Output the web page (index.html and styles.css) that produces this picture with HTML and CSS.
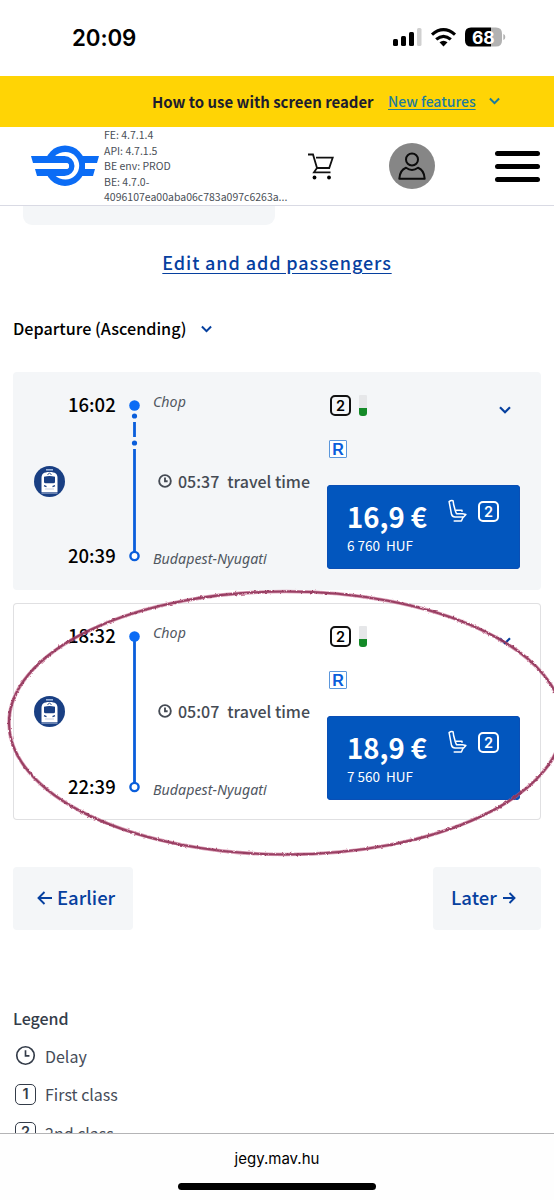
FILE: index.html
```
<!DOCTYPE html>
<html lang="en">
<head>
<meta charset="utf-8">
<title>MÁV</title>
<link rel="stylesheet" href="styles.css">
</head>
<body>
<svg class="defs" width="0" height="0">
  <symbol id="train" viewBox="0 0 31 31">
    <circle cx="15.5" cy="15.5" r="15.5" fill="#193f83"/>
    <path d="M12 3.800h7" stroke="#9db5dc" stroke-width="1.600"/>
    <path d="M7.500 26V12c0-4 2-6 8-6s8 2 8 6v14z" fill="#fff"/>
    <path d="M13.500 9l2-2.200 2 2.200" stroke="#193f83" stroke-width=".9" fill="none"/>
    <path d="M10 10.700q5.500-1.600 11 0v5q0 1.600-1.600 1.600h-7.800q-1.600 0-1.600-1.600z" fill="#193f83"/>
    <path d="M10 19.700l2.500.9M21 19.700l-2.500.9" stroke="#193f83" stroke-width="1.300"/>
    <path d="M11 23h9" stroke="#b9c5da" stroke-width=".8"/>
    <path d="M7.500 27h16" stroke="#9fb0cf" stroke-width="1.200"/>
  </symbol>
  <symbol id="clock" viewBox="0 0 24 24">
    <circle cx="12" cy="12" r="10" fill="none" stroke="currentColor" stroke-width="var(--sw)"/>
    <path d="M12 6v6.500h4.500" fill="none" stroke="currentColor" stroke-width="var(--sw)"/>
  </symbol>
  <symbol id="seat" viewBox="0 0 19 24">
    <g fill="none" stroke="#fff" stroke-width="1.500" stroke-linejoin="round" stroke-linecap="round">
      <path d="M5.500 4.300 5 1.600Q3 .9 1.100 2.600L3.500 15.300Q4.200 18 7 18h8.600l2.300-2.400-3.400-.9H8.500L7.300 11.800 5.500 5"/>
      <path d="M8 11.300h6v1"/>
      <path d="M15 18.200l-1.600 3.800H6.200"/>
    </g>
  </symbol>
  <symbol id="chevron" viewBox="0 0 12 8"><path d="M1 1.300l5 5 5-5" fill="none" stroke="currentColor" stroke-width="2.200"/></symbol>
</svg>

<header class="status">
  <span class="status-time">20:09</span>
  <svg class="status-icons" width="114" height="22" viewBox="0 0 114 22">
    <rect x="0" y="12" width="5" height="7" rx="1.500"/>
    <rect x="8" y="9" width="5" height="10" rx="1.500"/>
    <rect x="16" y="5" width="5" height="14" rx="1.500"/>
    <rect x="24" y="1" width="4.500" height="18" rx="1.500" fill="#d0d0d0"/>
    <g fill="none" stroke="#000" stroke-width="3.200">
      <path d="M39 7.600q11.500-9.800 23 0"/>
      <path d="M43.200 12.400q7.300-6.200 14.600 0"/>
    </g>
    <path d="M46.500 15.200q4-3 8 0l-4 4.200z"/>
    <path d="M78 .5h20v19H78q-6 0-6-6v-7q0-6 6-6z"/>
    <path d="M98 .5h5q6 0 6 6v7q0 6-6 6h-5z" fill="#b2b2b2"/>
    <path d="M110.300 7q2 .7 2 3t-2 3z" fill="#b2b2b2"/>
    <text x="79" y="16.500" class="battery">68</text>
  </svg>
</header>

<div class="banner">
  <span class="banner-text">How to use with screen reader</span>
  <a class="banner-link">New features</a>
  <svg class="chev banner-chev"><use href="#chevron"/></svg>
</div>

<nav class="nav">
  <svg class="logo" width="68" height="42" viewBox="0 0 68 42">
    <circle cx="34" cy="20.700" r="20.200" fill="#0b6cf5"/>
    <path d="M48 11h20l-2 7H54v6h10l-2 7H48z" fill="#0b6cf5"/>
    <path d="M54 18h14v6H54z" fill="#fff"/>
    <path d="M24 11q4.500-4 10.500-4a13.700 13.700 0 0 1 0 27.400q-6 0-10.500-4z" fill="#fff"/>
    <path d="M0 11h33.500a10 10 0 0 1 0 20H6l-2-7h31a3 3 0 0 0 0-6H2z" fill="#0b6cf5"/>
    <path d="M2 18h33a3 3 0 0 1 0 6H2z" fill="#fff"/>
  </svg>
  <div class="versions">
    <div>FE: 4.7.1.4</div><div>API: 4.7.1.5</div><div>BE env: PROD</div><div>BE: 4.7.0-</div><div class="hash">4096107ea00aba06c783a097c6263a...</div>
  </div>
  <svg class="cart" width="26" height="28" viewBox="0 0 26 28">
    <path d="M0 2.500h5l4 13.500M8 5.700h16.700l-3.500 10.300H9M9 16l-3 4.300H22.500" fill="none" stroke="#111" stroke-width="1.800"/>
    <circle cx="6.500" cy="25.500" r="1.900"/><circle cx="21" cy="25.500" r="1.900"/>
  </svg>
  <svg class="user" width="46" height="46" viewBox="0 0 46 46">
    <circle cx="23" cy="23" r="23" fill="#868686"/>
    <g fill="none" stroke="#0c0c0c" stroke-width="2" stroke-linejoin="round">
      <circle cx="23" cy="16.500" r="6"/>
      <path d="M17 24.800q6 4.400 12 0 6.300 2.500 6.700 11H10.300q.4-8.500 6.700-11z"/>
    </g>
  </svg>
  <div class="menu"><i></i><i></i><i></i></div>
</nav>

<main class="page">
  <div class="stub"></div>
  <a class="edit">Edit and add passengers</a>
  <div class="sort"><span class="sort-text">Departure (Ascending)</span><svg class="chev sort-chev"><use href="#chevron"/></svg></div>

  <section class="card card-grey">
    <svg class="train"><use href="#train"/></svg>
    <div class="times"><span>16:02</span><span>20:39</span></div>
    <svg class="rail" width="18" height="181" viewBox="0 0 18 181">
      <path d="M8.500 32v15M8.500 59v107" stroke="#0a5edb" stroke-width="2.800"/>
      <circle cx="8.500" cy="15.500" r="5.300" fill="#0b6cf5"/>
      <circle cx="8.500" cy="26" r="2.600" fill="#0a5edb"/><circle cx="8.500" cy="53" r="2.600" fill="#0a5edb"/>
      <circle cx="8.500" cy="166" r="4.100" fill="#fff" stroke="#0a5edb" stroke-width="2.400"/>
    </svg>
    <div class="stations">
      <em class="chop">Chop</em>
      <div class="travel"><svg class="clock-s"><use href="#clock"/></svg><span class="dur">05:37</span><span>travel time</span></div>
      <em class="buda">Budapest-Nyugati</em>
    </div>
    <div class="offer">
      <div class="row"><b class="cls">2</b><i class="level"></i><svg class="chev card-chev"><use href="#chevron"/></svg></div>
      <b class="res">R</b>
      <div class="price">
        <div><div class="eur">16,9 €</div><div class="huf">6 760&nbsp; HUF</div></div>
        <svg class="seat"><use href="#seat"/></svg><b class="cls cls-w">2</b>
      </div>
    </div>
  </section>

  <section class="card card-line">
    <svg class="train"><use href="#train"/></svg>
    <div class="times"><span>18:32</span><span>22:39</span></div>
    <svg class="rail" width="18" height="181" viewBox="0 0 18 181">
      <path d="M8.500 15v151" stroke="#0a5edb" stroke-width="2.800"/>
      <circle cx="8.500" cy="15.500" r="5.300" fill="#0b6cf5"/>
      <circle cx="8.500" cy="166" r="4.100" fill="#fff" stroke="#0a5edb" stroke-width="2.400"/>
    </svg>
    <div class="stations">
      <em class="chop">Chop</em>
      <div class="travel"><svg class="clock-s"><use href="#clock"/></svg><span class="dur">05:07</span><span>travel time</span></div>
      <em class="buda">Budapest-Nyugati</em>
    </div>
    <div class="offer">
      <div class="row"><b class="cls">2</b><i class="level"></i><svg class="chev card-chev"><use href="#chevron"/></svg></div>
      <b class="res">R</b>
      <div class="price">
        <div><div class="eur">18,9 €</div><div class="huf">7 560&nbsp; HUF</div></div>
        <svg class="seat"><use href="#seat"/></svg><b class="cls cls-w">2</b>
      </div>
    </div>
  </section>

  <div class="pager">
    <a class="btn earlier"><svg width="15" height="14" viewBox="0 0 15 14"><path d="M15 7H1.500M7.500 1l-6 6 6 6"/></svg><span>Earlier</span></a>
    <a class="btn later"><span>Later</span><svg width="13" height="12" viewBox="0 0 13 12"><path d="M0 6h11.500M6.500 1l5 5-5 5"/></svg></a>
  </div>

  <h2 class="legend-title">Legend</h2>
  <ul class="legend">
    <li><svg class="clock-l"><use href="#clock"/></svg><span>Delay</span></li>
    <li><b class="cls cls-g">1</b><span>First class</span></li>
    <li><b class="cls cls-g">2</b><span>2nd class</span></li>
  </ul>
</main>

<footer class="browser"><span class="url">jegy.mav.hu</span><i class="home"></i></footer>

<svg class="mark" width="554" height="300" viewBox="0 0 554 300">
  <filter id="rough" x="-5%" y="-5%" width="110%" height="110%">
    <feTurbulence type="fractalNoise" baseFrequency=".4" numOctaves="2" seed="4"/>
    <feDisplacementMap in="SourceGraphic" scale="2.500" xChannelSelector="R" yChannelSelector="G"/>
  </filter>
  <g fill="none" filter="url(#rough)">
    <ellipse cx="286" cy="148" rx="277" ry="131.500" stroke="#c25f85" stroke-opacity=".6" stroke-width="3.600"/>
    <ellipse cx="286" cy="148" rx="277" ry="131.500" stroke="#8e2f55" stroke-opacity=".85" stroke-width="2.200"/>
  </g>
</svg>
</body>
</html>
```
FILE: styles.css
```
* { box-sizing: border-box; }
body {
  margin: 0; width: 554px; height: 1200px; overflow: hidden; position: relative;
  display: flex; flex-direction: column; background: #fff; color: #000;
  font-family: "Noto Sans CJK SC", "Noto Sans", sans-serif;
}
.defs { position: absolute; }
i, em, b { display: block; }
a, span { white-space: nowrap; }
.chev { display: block; flex: none; }

.status { height: 76px; flex: none; display: flex; justify-content: space-between; padding: 24px 47px 0 72px; }
.status-time { font: 600 22.3px/28px Inter, sans-serif; letter-spacing: -.1px; }
.status-icons { margin-top: 3px; }
.battery { font: 700 17.500px Inter, sans-serif; fill: #fff; }

.banner { height: 51px; flex: none; background: #ffd405; display: flex; align-items: center; padding: 0 0 0 152px; line-height: 20px; font-size: 14.950px; }
.banner-text { font-weight: 700; color: #1c1c2e; width: 222px; }
.banner-link { margin: -1px 0 0 14px; width: 88px; font-size: 14px; font-weight: 500; color: #1c7c9c; text-decoration: underline; text-underline-offset: 2px; }
.banner-chev { width: 11px; height: 8px; margin: 0 0 1px 13px; color: #1c7c9c; }

.nav { height: 79px; flex: none; border-bottom: 1px solid #d9dae4; display: flex; align-items: center; padding-left: 31px; }
.logo { flex: none; }
.versions { margin-left: 5px; width: 204px; font-size: 10.500px; line-height: 15.400px; color: #4a4f57; }
.versions div { white-space: nowrap; }
.cart { flex: none; }
.user { margin-left: 55px; flex: none; }
.menu { margin-left: 60px; width: 45px; display: flex; flex-direction: column; gap: 8px; }
.menu i { height: 5px; border-radius: 3px; background: #000; }

.page { flex: 1; min-height: 0; overflow: hidden; padding: 0 13px; display: flex; flex-direction: column; }
.stub { flex: none; width: 252px; height: 19px; margin-left: 10px; background: #f4f6f8; border-radius: 0 0 9px 9px; }
.edit { align-self: center; margin-top: 21px; line-height: 32px; font-size: 18px; font-weight: 500; color: #06409f; letter-spacing: .9px; text-decoration: underline; text-underline-offset: 3px; }
.sort { flex: none; display: flex; align-items: center; height: 30px; margin-top: 35px; font-size: 16.200px; font-weight: 500; }
.sort-text { width: 173px; }
.sort-chev { width: 11px; height: 8px; margin: 1px 0 0 15px; color: #06409f; }

.card {
  flex: none; height: 217.500px; margin-bottom: 13px; border-radius: 4px; padding: 18px 21px 18.500px;
  display: grid; grid-template-columns: 31px 48px 18px 174px 193px; column-gap: 0;
}
.card-grey { background: #f4f6f8; margin-top: 29px; }
.card-line { box-shadow: inset 0 0 0 1px #e0e0e2; }
.train { width: 31px; height: 31px; align-self: center; margin-top: 1px; }
.times { margin-left: 3px; display: flex; flex-direction: column; justify-content: space-between; padding: 2px 0 4px; font-size: 18.500px; line-height: 24px; font-weight: 500; }
.rail { margin-left: 13px; overflow: visible; }
.stations { margin: 0 0 0 22px; display: flex; flex-direction: column; justify-content: space-between; color: #454b54; }
.stations em { font: italic 400 14.200px/24px "Noto Sans", sans-serif; letter-spacing: .04px; color: #50565f; }
.travel { display: flex; align-items: center; font-size: 16px; line-height: 24px; font-weight: 500; padding-left: 5px; white-space: nowrap; }
.clock-s { --sw: 3.200; width: 14px; height: 14px; margin-right: 6px; flex: none; }
.dur { margin-right: 8px; }
.offer { margin-left: 22px; width: 193px; }
.row { display: flex; padding: 5px 0 0 3px; height: 26px; }
.cls { width: 21px; height: 21px; border: 2px solid #111; border-radius: 5px; font: 600 14.500px/17px Inter, sans-serif; text-align: center; flex: none; }
.level { width: 8px; height: 21px; margin-left: 8px; border-radius: 1px 1px 3px 3px; background: linear-gradient(#e6e7e9 60%, #148a28 60%); }
.card-chev { width: 12px; height: 8px; margin: 11px 0 0 132px; color: #06409f; }
.res { margin: 24px 0 0 2px; width: 18px; height: 18px; border: 1px solid #5b97dc; border-radius: 1px; background: #fff; color: #0a5edb; font: 700 16px/17px "Liberation Sans", sans-serif; text-align: center; }
.price { margin-top: 27px; height: 84px; background: #0256be; border-radius: 4px; color: #fff; display: flex; padding: 13px 0 0 20px; box-shadow: inset 0 0 0 1px #0a4fb5; }
.price > div { width: 101px; white-space: nowrap; }
.eur { font-size: 27.500px; line-height: 36px; font-weight: 700; }
.huf { font-size: 13.500px; line-height: 20px; margin-top: 1px; }
.seat { width: 19px; height: 24px; flex: none; margin-top: 1px; }
.cls-w { border-color: #fff; margin: 3px 0 0 11px; }

.pager { flex: none; display: flex; justify-content: space-between; margin-top: 34px; }
.btn { height: 62.500px; border-radius: 4px; background: #f4f6f8; display: flex; align-items: center; color: #06409f; font-size: 18.500px; font-weight: 500; line-height: 28px; padding-bottom: 2px; }
.btn svg { fill: none; stroke: #06409f; stroke-width: 1.900; margin-top: 2px; }
.earlier { width: 120px; padding-left: 24px; gap: 5px; }
.later { width: 108px; padding-left: 18px; gap: 6px; }

.legend-title { margin: 76px 0 0; font-size: 16px; line-height: 24px; font-weight: 500; color: #343c49; }
.legend { margin: 7px 0 0; padding: 0 0 0 2px; list-style: none; color: #454c58; font-size: 16px; }
.legend li { height: 38.500px; display: flex; align-items: center; gap: 9px; line-height: 24px; }
.clock-l { --sw: 1.900; width: 21px; height: 21px; flex: none; color: #343c49; }
.cls-g { border-color: #343c49; color: #343c49; border-width: 1.500px; line-height: 18px; }

.browser { height: 67px; flex: none; border-top: 1px solid #b4b4b6; background: #fefefe; display: flex; flex-direction: column; align-items: center; padding-top: 15px; }
.url { font: 400 15px/20px Inter, sans-serif; }
.home { width: 198px; height: 7px; border-radius: 4px; background: #000; margin-top: 14px; }

.mark { position: absolute; left: 0; top: 575px; pointer-events: none; }
```
